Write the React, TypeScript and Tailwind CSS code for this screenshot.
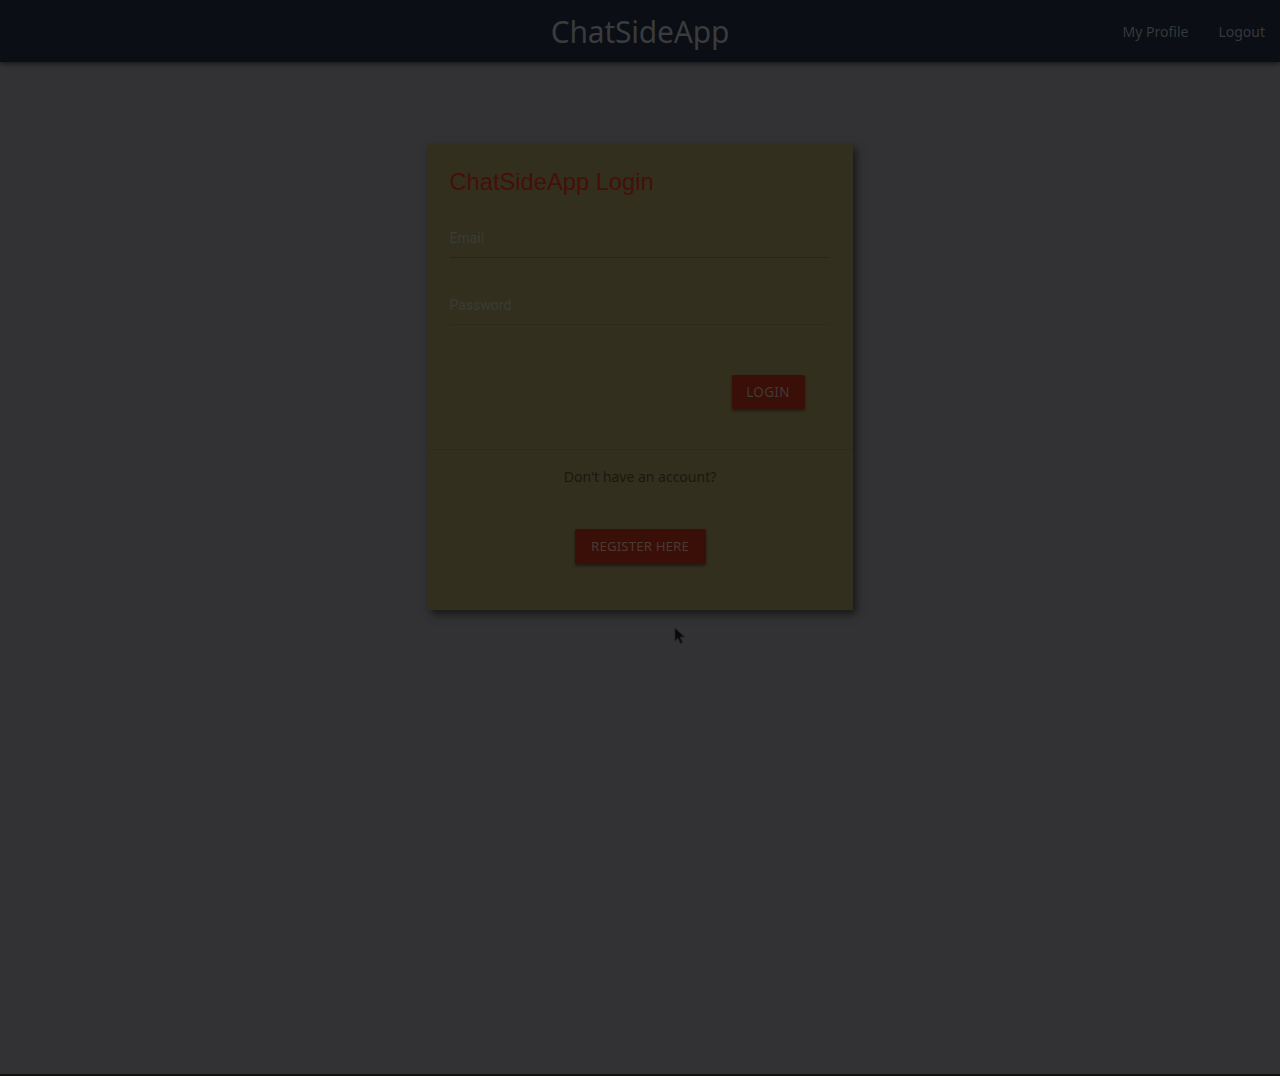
export default function App() {
  return (
    <div className="relative min-h-[1076px] bg-[#323234] flex flex-col font-['Open_Sans',sans-serif]">
      <header className="h-[62px] bg-[#0b0e14] shadow-[0_2px_4px_rgba(0,0,0,0.5)] grid grid-cols-[1fr_auto_1fr] items-center shrink-0">
        <div />
        <span className="text-[30px] leading-none text-[#3a3b3e] font-['Noto_Sans',sans-serif] tracking-[-0.2px] pt-[2px]">ChatSideApp</span>
        <nav className="flex justify-end items-center gap-[30px] pr-[15px] pt-[1px] text-[14px] text-[#37383b] font-['Noto_Sans',sans-serif]">
          <span>My Profile</span>
          <span>Logout</span>
        </nav>
      </header>

      <main className="flex-1 flex justify-center pt-[82px]">
        <div className="w-[425px] h-[466px] bg-[#322f1e] shadow-[3px_4px_8px_rgba(0,0,0,0.55)] flex flex-col">
          <div className="px-[22px] pt-[24px] pb-[40px] border-b border-[#2d2b1c]">
            <h1 className="text-[23.7px] leading-[28px] text-[#451007] font-['Liberation_Sans',sans-serif]">ChatSideApp Login</h1>
            <div className="mt-[33px] pr-[2px]">
              <label className="block text-[14px] leading-[18px] text-[#3a3c36] font-['Roboto',sans-serif]">Email</label>
              <div className="mt-[10px] h-[1px] bg-[#26261c] w-[379px]" />
            </div>
            <div className="mt-[38px]">
              <label className="block text-[14px] leading-[18px] text-[#3a3c36] font-['Roboto',sans-serif]">Password</label>
              <div className="mt-[10px] h-[1px] bg-[#2a2a1d] w-[379px]" />
            </div>
            <div className="flex justify-end pr-[26px] mt-[50px]">
              <button className="w-[73px] h-[34px] bg-[#3a0f07] text-[#3f3b38] text-[13.5px] tracking-[0.3px] rounded-[2px] shadow-[0_2px_3px_rgba(0,0,0,0.4)] font-['Noto_Sans',sans-serif]">LOGIN</button>
            </div>
          </div>
          <div className="flex flex-col items-center pt-[16px]">
            <p className="text-[14px] leading-[22px] text-[#19180f] font-['Noto_Sans',sans-serif]">Don't have an account?</p>
            <button className="mt-[41px] w-[131px] h-[35px] bg-[#3a0f07] text-[#4a3a34] text-[13.3px] tracking-[0.1px] rounded-[2px] shadow-[0_2px_3px_rgba(0,0,0,0.4)] font-['Noto_Sans',sans-serif]">REGISTER HERE</button>
          </div>
        </div>
      </main>

      <div className="h-[2px] bg-[#111113] shrink-0" />

      <svg className="absolute left-[674px] top-[627px]" width="12" height="18" viewBox="0 0 12 18">
        <path d="M1 1 L1 14 L4 11 L6.5 16.5 L8.5 15.5 L6 10 L10.5 10 Z" fill="#0a0a0a" stroke="#222" strokeWidth="0.8" />
      </svg>
    </div>
  )
}
